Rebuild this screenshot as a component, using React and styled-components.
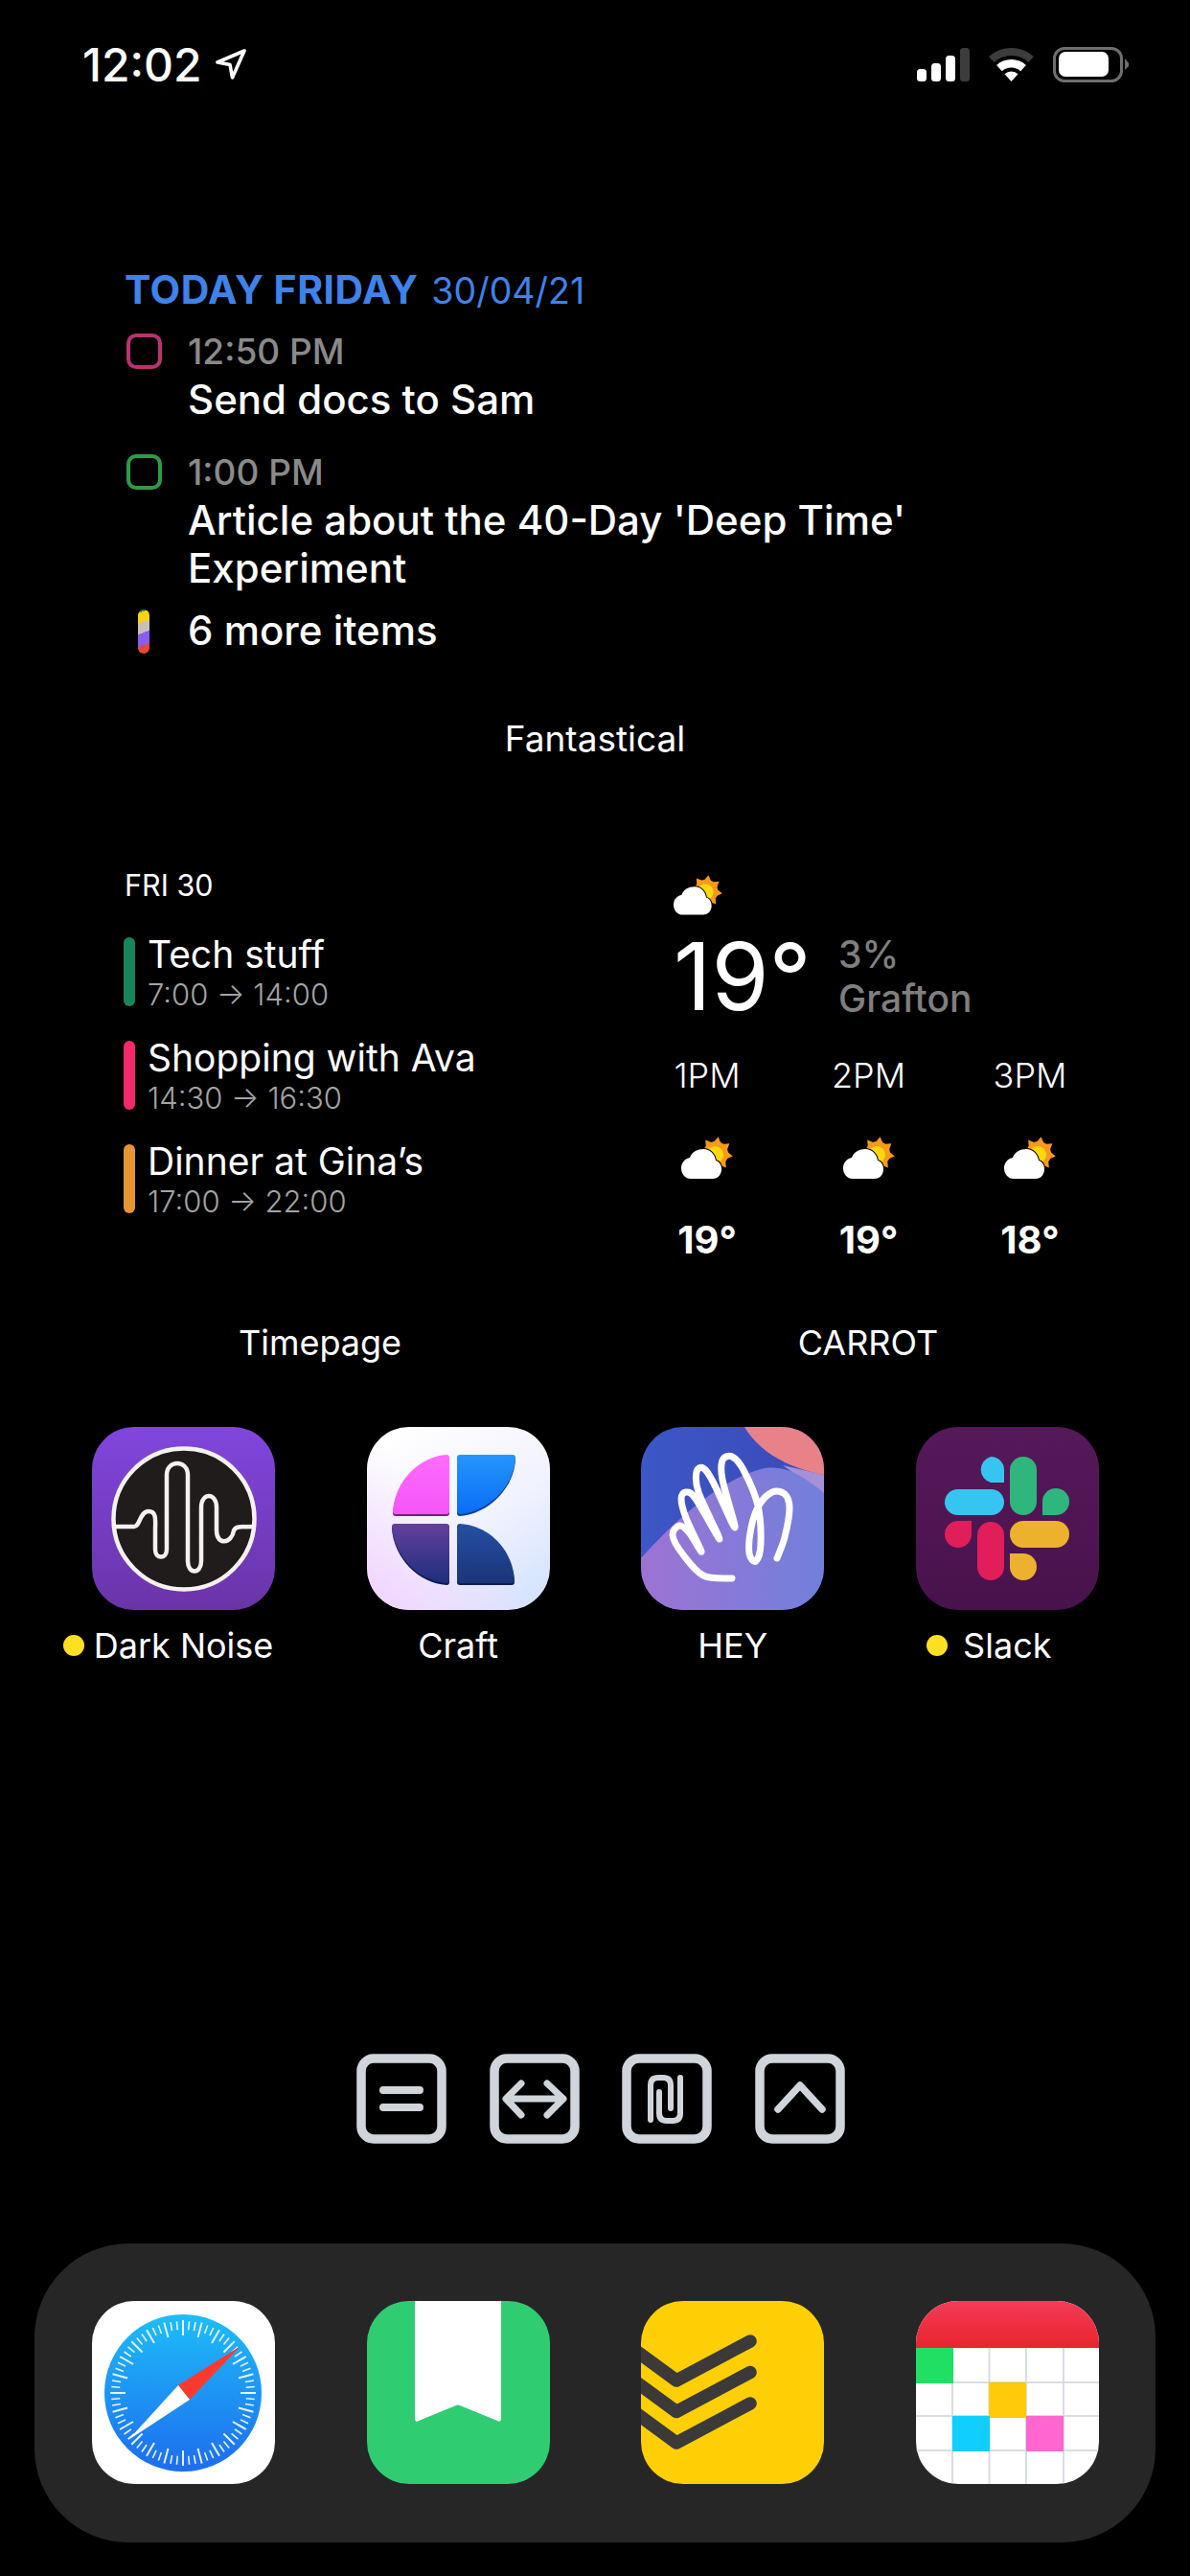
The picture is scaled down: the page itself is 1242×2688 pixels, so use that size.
import React from 'react'
import styled, { createGlobalStyle } from 'styled-components'

const GlobalStyle = createGlobalStyle`
  html, body {
    margin: 0;
    padding: 0;
    background: #000;
  }
  * {
    box-sizing: border-box;
  }
`

const Page = styled.div`
  width: 1242px;
  height: 2688px;
  overflow: hidden;
  background: #000;
  color: #fff;
  font-family: Inter, "Noto Sans", "Liberation Sans", sans-serif;
  display: flex;
  flex-direction: column;
`

const StatusBar = styled.div`
  height: 134px;
  padding: 0 64px 0 86px;
  display: flex;
  align-items: center;
  justify-content: space-between;
`

const Clock = styled.div`
  display: flex;
  align-items: center;
  gap: 13px;
  font-size: 48px;
  font-weight: 500;
`

const StatusIcons = styled.div`
  display: flex;
  align-items: center;
  gap: 20px;
`

const Agenda = styled.div`
  margin-top: 148px;
  padding-left: 130px;
`

const AgendaHeader = styled.div`
  height: 40px;
  line-height: 40px;
  font-size: 41px;
  color: #3f82ea;
  white-space: nowrap;
  b {
    font-weight: 700;
    letter-spacing: 0.5px;
    margin-right: 14px;
  }
  span {
    font-size: 37.5px;
    font-weight: 400;
  }
`

const AgendaRow = styled.div`
  display: flex;
  margin-top: ${(p) => p.$top}px;
`

const RowMarker = styled.div`
  width: 66px;
  flex: none;
  padding-top: ${(p) => p.$top}px;
`

const Checkbox = styled.div`
  width: 37px;
  height: 37px;
  margin-left: 2px;
  border-radius: 10px;
  border: 4px solid ${(p) => p.$color};
`

const MorePill = styled.div`
  width: 12px;
  height: 46px;
  margin-left: 14px;
  border-radius: 6px;
  background: linear-gradient(160deg, #3e8f3a 0 8%, #f7d313 8% 30%, #c6c0b8 30% 52%, #8a5cf0 52% 78%, #e6463c 78%);
`

const AgendaTime = styled.div`
  line-height: 50px;
  font-size: 37px;
  font-weight: 500;
  color: #8a8a8a;
`

const AgendaTitle = styled.div`
  width: 820px;
  line-height: 50px;
  font-size: 42px;
  font-weight: 500;
`

const WidgetName = styled.div`
  line-height: 40px;
  font-size: 36px;
  font-weight: 400;
  text-align: center;
`

const AgendaName = styled(WidgetName)`
  margin-top: 68px;
  font-size: 37px;
`

const Widgets = styled.div`
  margin-top: 115px;
  padding-left: 130px;
  display: grid;
  grid-template-columns: 573px 1fr;
`

const DayLabel = styled.div`
  line-height: 36px;
  margin-bottom: 36px;
  font-size: 30.5px;
  font-weight: 400;
`

const Event = styled.div`
  height: 72px;
  margin-bottom: 36px;
  display: flex;
  gap: 13px;
`

const EventBar = styled.div`
  width: 12px;
  height: 72px;
  margin-left: -1px;
  border-radius: 6px;
  background: ${(p) => p.$color};
`

const EventTitle = styled.div`
  line-height: 36px;
  font-size: 39px;
  font-weight: 400;
`

const EventTime = styled.div`
  margin-top: 6px;
  line-height: 36px;
  font-size: 31px;
  font-weight: 300;
  color: #a3a3a3;
`

const Weather = styled.div`
  padding-top: 7px;
  > svg {
    display: block;
  }
`

const CurrentRow = styled.div`
  margin-top: 13px;
  display: flex;
  align-items: center;
`

const CurrentTemp = styled.div`
  width: 172px;
  line-height: 100px;
  font-size: 97px;
  font-weight: 400;
`

const CurrentInfo = styled.div`
  line-height: 46px;
  font-size: 39px;
  font-weight: 500;
  color: #7f7f7f;
`

const Hours = styled.div`
  margin-top: 33px;
  display: grid;
  grid-template-columns: repeat(3, 70px);
  column-gap: 98.5px;
`

const Hour = styled.div`
  display: flex;
  flex-direction: column;
  align-items: center;
`

const HourLabel = styled.div`
  line-height: 40px;
  margin-bottom: 44px;
  font-size: 36px;
  font-weight: 300;
  white-space: nowrap;
`

const HourTemp = styled.div`
  line-height: 40px;
  margin-top: 43px;
  font-size: 40px;
  font-weight: 700;
  white-space: nowrap;
`

const WidgetNames = styled.div`
  margin-top: 67px;
  display: grid;
  grid-template-columns: 668px 476px;
`

const AppGrid = styled.div`
  margin-top: 68px;
  padding-left: 96px;
  display: grid;
  grid-template-columns: repeat(4, 191px);
  column-gap: 95.6px;
`

const AppCell = styled.div`
  display: flex;
  flex-direction: column;
  align-items: center;
`

const AppIcon = styled.div`
  width: 191px;
  height: 191px;
  border-radius: 44px;
  overflow: hidden;
  svg {
    display: block;
  }
`

const AppLabel = styled.div`
  position: relative;
  margin-top: 17px;
  line-height: 40px;
  font-size: 36px;
  font-weight: 400;
  white-space: nowrap;
`

const UpdateDot = styled.span`
  position: absolute;
  top: 9px;
  right: 100%;
  margin-right: ${(p) => p.$gap}px;
  width: 22px;
  height: 22px;
  border-radius: 50%;
  background: #fde021;
`

const Shortcuts = styled.div`
  margin-top: 406px;
  padding-left: 372px;
  display: flex;
  gap: 44.6px;
`

const Dock = styled.div`
  margin: 104px 0 0 36px;
  width: 1170px;
  height: 312px;
  padding: 60px 0 0 60px;
  border-radius: 98px;
  background: #262626;
  display: grid;
  grid-template-columns: repeat(4, 191px);
  column-gap: 95.6px;
`

function CellSignal() {
  return (
    <svg width="55" height="35" viewBox="0 0 55 35">
      <rect x="0" y="22" width="10" height="13" rx="3.500" fill="#fff" />
      <rect x="15" y="16" width="10" height="19" rx="3.500" fill="#fff" />
      <rect x="30" y="8" width="10" height="27" rx="3.500" fill="#fff" />
      <rect x="45" y="0" width="10" height="35" rx="3.500" fill="#3c3c3c" />
    </svg>
  )
}

function Wifi() {
  return (
    <svg width="47" height="35" viewBox="0 0 47 35">
      <path d="M0.100 9 A35 35 0 0 1 46.900 9 L41.600 14.900 A27 27 0 0 0 5.400 14.900Z" fill="#3c3c3c" />
      <path d="M8.100 17.900 A23 23 0 0 1 38.900 17.900 L33.200 24.200 A14.500 14.500 0 0 0 13.800 24.200Z" fill="#fff" />
      <path d="M16.500 27.200 A10.500 10.500 0 0 1 30.500 27.200 L23.500 35Z" fill="#fff" />
    </svg>
  )
}

function Battery() {
  return (
    <svg width="79" height="37" viewBox="0 0 79 37">
      <rect x="1.500" y="1.500" width="70" height="34" rx="10.500" fill="none" stroke="#6e6e6e" strokeWidth="3" />
      <rect x="6" y="5" width="52" height="26" rx="7" fill="#fff" />
      <path d="M75 12 L79 17 V20 L75 24Z" fill="#6e6e6e" />
    </svg>
  )
}

function LocationArrow() {
  return (
    <svg width="34" height="34" viewBox="0 0 34 34">
      <path d="M31 3 L3 15 L16 17.500 L18.500 31Z" fill="none" stroke="#fff" strokeWidth="3.600" strokeLinejoin="round" />
    </svg>
  )
}

function PartlyCloudy({ size = 54 }) {
  const rays = Array.from({ length: 8 }, (_, i) => (i * 360) / 8)
  return (
    <svg width={size} height={(size * 45) / 54} viewBox="0 0 54 45">
      {rays.map((a) => (
        <path key={a} d="M36 0 L41 8 H31Z" fill="#f79a1c" transform={`rotate(${a + 8} 36 18)`} />
      ))}
      <circle cx="36" cy="18" r="13" fill="#f79a1c" />
      <circle cx="35" cy="19" r="9" fill="#ffd80a" />
      <path
        d="M10 44 C4 44 0 39 0 33 C0 27 4 23 9 22 C11 16 17 13 23 13 C30 13 35 18 36 25 C40 26 42 30 42 34 C42 40 38 44 33 44 Z"
        fill="#fff"
        stroke="#000"
        strokeWidth="2"
        paintOrder="stroke"
      />
    </svg>
  )
}

function smooth(points) {
  let d = `M${points[0][0]} ${points[0][1]}`
  for (let i = 0; i < points.length - 1; i++) {
    const p0 = points[i - 1] || points[i]
    const p1 = points[i]
    const p2 = points[i + 1]
    const p3 = points[i + 2] || p2
    d += ` C${p1[0] + (p2[0] - p0[0]) / 6} ${p1[1] + (p2[1] - p0[1]) / 6} ${p2[0] - (p3[0] - p1[0]) / 6} ${p2[1] - (p3[1] - p1[1]) / 6} ${p2[0]} ${p2[1]}`
  }
  return d
}

const HAND = [
  [95, 158], [65, 155], [43, 132], [33, 113], [40, 103], [50, 110], [63, 130],
  [47, 95], [42, 75], [47, 68], [57, 75], [82, 117],
  [60, 68], [58, 47], [65, 43], [75, 57], [98, 105],
  [85, 55], [85, 35], [95, 31], [107, 45], [122, 82], [125, 122], [120, 140], [113, 132], [115, 105], [123, 82],
  [137, 68], [150, 70], [155, 85], [150, 115], [142, 137],
]

function DarkNoiseIcon() {
  return (
    <svg width="191" height="191" viewBox="0 0 191 191">
      <defs>
        <linearGradient id="dn" x1="0" y1="0" x2="0" y2="1">
          <stop offset="0" stopColor="#8046dd" />
          <stop offset="1" stopColor="#6a34a8" />
        </linearGradient>
      </defs>
      <rect width="191" height="191" fill="url(#dn)" />
      <circle cx="96" cy="96" r="73.500" fill="#1f1c1b" stroke="#f6f1f1" strokeWidth="4.500" />
      <path
        d="M22 104 H44 C50 104 50 88 59 88 C68 88 66 98 66 108 V128 C66 138 78 138 78 128 V50 C78 34 100 34 100 50 V140 C100 154 114 154 114 140 V84 C114 68 130 68 130 84 V108 C130 124 146 122 148 108 C150 104 152 104 170 104"
        fill="none"
        stroke="#f6f1f1"
        strokeWidth="4.500"
      />
    </svg>
  )
}

function CraftIcon() {
  const pink = 'M83 29 Q86 29 86 32 V88 Q86 91 83 91 H30 Q27 91 27 88 C29 57 54 31 83 29Z'
  const blue = 'M97 29 H152 Q155 29 155 32 C153 62 128 88 97 91 Q94 91 94 88 V32 Q94 29 97 29Z'
  const navy = 'M29 101 H83 Q86 101 86 104 V160 Q86 163 83 163 C54 161 28 135 26 104 Q26 101 29 101Z'
  const deep = 'M97 101 C128 103 152 128 154 160 Q154 163 151 163 H97 Q94 163 94 160 V104 Q94 101 97 101Z'
  return (
    <svg width="191" height="191" viewBox="0 0 191 191">
      <defs>
        <linearGradient id="cb" x1="0.200" y1="0" x2="0.900" y2="1">
          <stop offset="0" stopColor="#ffffff" />
          <stop offset="0.550" stopColor="#f1f2ff" />
          <stop offset="1" stopColor="#d2e2ff" />
        </linearGradient>
        <linearGradient id="cg" x1="1" y1="0" x2="0" y2="1">
          <stop offset="0.500" stopColor="#f2d8ff" stopOpacity="0" />
          <stop offset="1" stopColor="#f2d0ff" />
        </linearGradient>
        <linearGradient id="c1" x1="0" y1="0" x2="0" y2="1">
          <stop offset="0" stopColor="#ff6cff" />
          <stop offset="1" stopColor="#f455f5" />
        </linearGradient>
        <linearGradient id="c2" x1="0" y1="0" x2="0" y2="1">
          <stop offset="0" stopColor="#2596ff" />
          <stop offset="1" stopColor="#0a6cf5" />
        </linearGradient>
        <linearGradient id="c3" x1="0" y1="0" x2="0" y2="1">
          <stop offset="0" stopColor="#64409c" />
          <stop offset="1" stopColor="#1d2f7c" />
        </linearGradient>
        <linearGradient id="c4" x1="0" y1="0" x2="0" y2="1">
          <stop offset="0" stopColor="#2450a4" />
          <stop offset="1" stopColor="#1b3479" />
        </linearGradient>
      </defs>
      <rect width="191" height="191" fill="url(#cb)" />
      <rect width="191" height="191" fill="url(#cg)" />
      <path d={pink} fill="#7a1a86" transform="translate(0 2)" />
      <path d={blue} fill="#0b3d94" transform="translate(0 2)" />
      <path d={navy} fill="#0f1a52" transform="translate(0 2)" />
      <path d={deep} fill="#0f1f56" transform="translate(0 2)" />
      <path d={pink} fill="url(#c1)" />
      <path d={blue} fill="url(#c2)" />
      <path d={navy} fill="url(#c3)" />
      <path d={deep} fill="url(#c4)" />
    </svg>
  )
}

function HeyIcon() {
  return (
    <svg width="191" height="191" viewBox="0 0 191 191">
      <defs>
        <linearGradient id="hb" x1="0" y1="0" x2="1" y2="0">
          <stop offset="0" stopColor="#3c57c6" />
          <stop offset="1" stopColor="#3b49b8" />
        </linearGradient>
        <linearGradient id="hp" x1="0" y1="0" x2="1" y2="0">
          <stop offset="0" stopColor="#9d73d3" />
          <stop offset="1" stopColor="#7180dc" />
        </linearGradient>
      </defs>
      <rect width="191" height="191" fill="url(#hb)" />
      <path d="M148 40 L191 50 V72Z" fill="#a591d8" />
      <path d="M108 0 C122 24 150 42 191 50 V0Z" fill="#e98189" />
      <path d="M0 137 C40 92 85 55 125 44 C150 38 170 52 191 69 V191 H0Z" fill="url(#hp)" />
      <path d={smooth(HAND)} fill="none" stroke="#fff" strokeWidth="7" strokeLinecap="round" strokeLinejoin="round" />
    </svg>
  )
}

function SlackIcon() {
  return (
    <svg width="191" height="191" viewBox="0 0 191 191">
      <defs>
        <linearGradient id="sb" x1="0" y1="0" x2="0" y2="1">
          <stop offset="0" stopColor="#56195a" />
          <stop offset="1" stopColor="#48124c" />
        </linearGradient>
      </defs>
      <rect width="191" height="191" fill="url(#sb)" />
      <path d="M78 31 A14 14 0 0 0 78 58 H92 V45 A14 14 0 0 0 78 31Z" fill="#36c5f0" />
      <rect x="30" y="65" width="62" height="27" rx="13.500" fill="#36c5f0" />
      <rect x="98" y="31" width="28" height="61" rx="14" fill="#2eb67d" />
      <path d="M160 78 A14 14 0 0 0 132 78 V92 H146 A14 14 0 0 0 160 78Z" fill="#2eb67d" />
      <path d="M44 98 A14 14 0 0 0 44 126 A14 14 0 0 0 58 112 V98Z" fill="#e01e5a" />
      <rect x="64" y="99" width="28" height="61" rx="14" fill="#e01e5a" />
      <rect x="98" y="98" width="62" height="28" rx="14" fill="#ecb22e" />
      <path d="M98 132 H112 A14 14 0 0 1 112 160 A14 14 0 0 1 98 146Z" fill="#ecb22e" />
    </svg>
  )
}

function SafariIcon() {
  const ticks = Array.from({ length: 72 }, (_, i) => i * 5)
  return (
    <svg width="191" height="191" viewBox="0 0 191 191">
      <defs>
        <linearGradient id="sf" x1="0" y1="0" x2="0" y2="1">
          <stop offset="0" stopColor="#1dbdf9" />
          <stop offset="1" stopColor="#1e6cee" />
        </linearGradient>
      </defs>
      <rect width="191" height="191" fill="#fff" />
      <circle cx="95" cy="96" r="82" fill="url(#sf)" />
      {ticks.map((a, i) => (
        <line
          key={a}
          x1="95"
          y1={i % 3 === 0 ? 20 : 21}
          x2="95"
          y2={i % 3 === 0 ? 36 : 30}
          stroke="#e6f4ff"
          strokeWidth={i % 3 === 0 ? 2 : 1.600}
          transform={`rotate(${a} 95 96)`}
        />
      ))}
      <path d="M155 47 L90 88 L102 103Z" fill="#fb3a2f" />
      <path d="M38 145 L90 88 L102 103Z" fill="#fff" />
    </svg>
  )
}

function BookmarkIcon() {
  return (
    <svg width="191" height="191" viewBox="0 0 191 191">
      <rect width="191" height="191" fill="#30cc72" />
      <path d="M50 0 H140 V123 Q140 127 136 125 L97 109 Q95 108 93 109 L54 125 Q50 127 50 123Z" fill="#fff" />
    </svg>
  )
}

function ChevronsIcon() {
  return (
    <svg width="191" height="191" viewBox="0 0 191 191">
      <rect width="191" height="191" fill="#ffcf06" />
      {[0, 32.500, 65].map((y) => (
        <path
          key={y}
          d={`M-8 ${50 + y} L37 ${83 + y} L114 ${42 + y}`}
          fill="none"
          stroke="#3b3a38"
          strokeWidth="13.500"
          strokeLinecap="round"
          strokeLinejoin="round"
        />
      ))}
    </svg>
  )
}

function FantasticalIcon() {
  const cols = [38, 76.500, 115, 154]
  const rows = [85, 120, 156]
  return (
    <svg width="191" height="191" viewBox="0 0 191 191">
      <defs>
        <linearGradient id="fh" x1="0" y1="0" x2="0" y2="1">
          <stop offset="0" stopColor="#f43b58" />
          <stop offset="1" stopColor="#e8252d" />
        </linearGradient>
      </defs>
      <rect width="191" height="191" fill="#fff" />
      <rect width="191" height="49" fill="url(#fh)" />
      {cols.map((x) => (
        <line key={x} x1={x} y1="49" x2={x} y2="191" stroke="#d8dce4" strokeWidth="2" />
      ))}
      {rows.map((y) => (
        <line key={y} x1="0" y1={y} x2="191" y2={y} stroke="#d8dce4" strokeWidth="2" />
      ))}
      <rect x="0" y="49" width="39" height="37" fill="#1fe062" />
      <rect x="76" y="85" width="39" height="37" fill="#ffca0a" />
      <rect x="38" y="120" width="39" height="37" fill="#10cfff" />
      <rect x="115" y="120" width="39" height="37" fill="#ff66d0" />
    </svg>
  )
}

function ShortcutGlyph({ children }) {
  return (
    <svg width="94" height="94" viewBox="0 0 94 94" fill="none" stroke="#d0d5dc" strokeLinecap="round" strokeLinejoin="round">
      <rect x="5" y="5" width="84" height="84" rx="13" strokeWidth="9.500" />
      {children}
    </svg>
  )
}

const AGENDA_ITEMS = [
  { top: 19.500, color: '#b8336f', time: '12:50 PM', title: 'Send docs to Sam' },
  { top: 26.500, color: '#2f9a46', time: '1:00 PM', title: "Article about the 40-Day 'Deep Time' Experiment" },
]

const EVENTS = [
  { color: '#17855a', title: 'Tech stuff', time: '7:00 → 14:00' },
  { color: '#f3296c', title: 'Shopping with Ava', time: '14:30 → 16:30' },
  { color: '#e59533', title: 'Dinner at Gina’s', time: '17:00 → 22:00' },
]

const HOURS = [
  { label: '1PM', temp: '19°' },
  { label: '2PM', temp: '19°' },
  { label: '3PM', temp: '18°' },
]

const APPS = [
  { name: 'Dark Noise', Icon: DarkNoiseIcon, dot: 10 },
  { name: 'Craft', Icon: CraftIcon },
  { name: 'HEY', Icon: HeyIcon },
  { name: 'Slack', Icon: SlackIcon, dot: 16 },
]

const DOCK = [SafariIcon, BookmarkIcon, ChevronsIcon, FantasticalIcon]

export default function App() {
  return (
    <Page>
      <GlobalStyle />
      <StatusBar>
        <Clock>
          12:02
          <LocationArrow />
        </Clock>
        <StatusIcons>
          <CellSignal />
          <Wifi />
          <Battery />
        </StatusIcons>
      </StatusBar>

      <Agenda>
        <AgendaHeader>
          <b>TODAY FRIDAY</b>
          <span>30/04/21</span>
        </AgendaHeader>
        {AGENDA_ITEMS.map((item) => (
          <AgendaRow key={item.time} $top={item.top}>
            <RowMarker $top={6}>
              <Checkbox $color={item.color} />
            </RowMarker>
            <div>
              <AgendaTime>{item.time}</AgendaTime>
              <AgendaTitle>{item.title}</AgendaTitle>
            </div>
          </AgendaRow>
        ))}
        <AgendaRow $top={15}>
          <RowMarker $top={3}>
            <MorePill />
          </RowMarker>
          <AgendaTitle>6 more items</AgendaTitle>
        </AgendaRow>
      </Agenda>
      <AgendaName>Fantastical</AgendaName>

      <Widgets>
        <div>
          <DayLabel>FRI 30</DayLabel>
          {EVENTS.map((ev) => (
            <Event key={ev.title}>
              <EventBar $color={ev.color} />
              <div>
                <EventTitle>{ev.title}</EventTitle>
                <EventTime>{ev.time}</EventTime>
              </div>
            </Event>
          ))}
        </div>
        <Weather>
          <PartlyCloudy size={51} />
          <CurrentRow>
            <CurrentTemp>19°</CurrentTemp>
            <CurrentInfo>
              3%
              <br />
              Grafton
            </CurrentInfo>
          </CurrentRow>
          <Hours>
            {HOURS.map((h) => (
              <Hour key={h.label}>
                <HourLabel>{h.label}</HourLabel>
                <PartlyCloudy />
                <HourTemp>{h.temp}</HourTemp>
              </Hour>
            ))}
          </Hours>
        </Weather>
      </Widgets>

      <WidgetNames>
        <WidgetName>Timepage</WidgetName>
        <WidgetName>CARROT</WidgetName>
      </WidgetNames>

      <AppGrid>
        {APPS.map(({ name, Icon, dot }) => (
          <AppCell key={name}>
            <AppIcon>
              <Icon />
            </AppIcon>
            <AppLabel>
              {dot && <UpdateDot $gap={dot} />}
              {name}
            </AppLabel>
          </AppCell>
        ))}
      </AppGrid>

      <Shortcuts>
        <ShortcutGlyph>
          <path d="M28 38 H66 M28 56 H66" strokeWidth="8" />
        </ShortcutGlyph>
        <ShortcutGlyph>
          <path d="M19 47 H75 M33 31 L17 47 L33 64 M60 31 L77 47 L60 64" strokeWidth="7" />
        </ShortcutGlyph>
        <ShortcutGlyph>
          <path d="M30 69 V33 Q30 25 38 25 H43 Q51 25 51 33 V57 M61 25 V62 Q61 70 53 70 H47 Q39 70 39 62 V40" strokeWidth="6" />
        </ShortcutGlyph>
        <ShortcutGlyph>
          <path d="M24 58 L47 33 L70 58" strokeWidth="7.500" />
        </ShortcutGlyph>
      </Shortcuts>

      <Dock>
        {DOCK.map((Icon, i) => (
          <AppIcon key={i}>
            <Icon />
          </AppIcon>
        ))}
      </Dock>
    </Page>
  )
}
